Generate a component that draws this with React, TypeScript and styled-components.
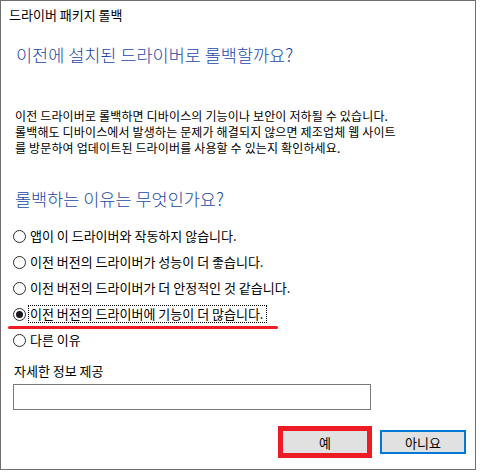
import { useState } from "react"
import styled, { createGlobalStyle } from "styled-components"

const GlobalStyle = createGlobalStyle`
    html, body {
        margin: 0;
        padding: 0;
        background: #ffffff;
    }
    body {
        font-family: "Noto Sans CJK KR", "Noto Sans", sans-serif;
        color: #000000;
    }
`

const Window = styled.div`
    box-sizing: border-box;
    display: flex;
    flex-direction: column;
    width: 476px;
    height: 470px;
    border: 1px solid #6e6e6e;
    background: #ffffff;
`

const TitleBar = styled.div`
    height: 29px;
    padding: 5px 0 0 8px;
    box-sizing: border-box;
    font-size: 13px;
    line-height: 18px;
`

const Body = styled.div`
    display: flex;
    flex-direction: column;
    padding: 0 9px 0 12px;
`

const MainInstruction = styled.div`
    margin: 13px 0 0 3px;
    font-size: 17.5px;
    font-weight: 300;
    line-height: 24px;
    color: #1a48a8;
`

const Description = styled.p`
    margin: 41px 0 0 2px;
    font-size: 12px;
    line-height: 16px;
    letter-spacing: 0.15px;
    white-space: nowrap;
`

const SubHeading = styled.div`
    margin: 31px 0 0 2px;
    font-size: 17.5px;
    font-weight: 300;
    line-height: 24px;
    color: #1a48a8;
`

const ReasonList = styled.div`
    display: flex;
    flex-direction: column;
    margin-top: 12px;
`

const ReasonRow = styled.label`
    position: relative;
    display: flex;
    align-items: center;
    height: 26px;
    font-size: 13px;
    cursor: default;
`

const RadioCircle = styled.span<{ $checked: boolean }>`
    position: relative;
    box-sizing: border-box;
    width: 13px;
    height: 13px;
    border: 1px solid #2b2b2b;
    border-radius: 50%;
    background: #ffffff;
    flex-shrink: 0;

    &::after {
        content: "";
        position: absolute;
        top: 2px;
        left: 2px;
        width: 7px;
        height: 7px;
        border-radius: 50%;
        background: ${({ $checked }) => ($checked ? "#1a1a1a" : "transparent")};
    }
`

const ReasonText = styled.span<{ $focused: boolean }>`
    margin-left: 2px;
    padding: 0 3px 0 1px;
    line-height: 16px;
    border: 1px dotted ${({ $focused }) => ($focused ? "#000000" : "transparent")};
`

const Highlight = styled.span`
    position: absolute;
    left: -5px;
    top: 25px;
    width: 270px;
    height: 3px;
    border-radius: 2px;
    background: #ed1c24;
`

const FieldLabel = styled.div`
    margin: 9px 0 0 1px;
    font-size: 13px;
    line-height: 18px;
`

const DetailInput = styled.input`
    box-sizing: border-box;
    width: 358px;
    height: 26px;
    margin-top: 4px;
    border: 1px solid #7a7a7a;
    outline: none;
    font-family: inherit;
    font-size: 12px;
`

const ButtonRow = styled.div`
    display: flex;
    justify-content: flex-end;
    gap: 12px;
    margin-top: 20px;
`

const DialogButton = styled.button<{ $primary?: boolean; $marked?: boolean }>`
    box-sizing: border-box;
    width: 86px;
    height: 24px;
    padding: 0;
    background: #e1e1e1;
    border: ${({ $primary }) => ($primary ? "2px solid #0078d7" : "1px solid #adadad")};
    border-bottom-color: ${({ $primary }) => ($primary ? "#0078d7" : "#9a9a9a")};
    outline: ${({ $marked }) => ($marked ? "5px solid #ed1c24" : "none")};
    outline-offset: -1px;
    font-family: inherit;
    font-size: 13px;
    color: #000000;
`

const reasons = [
    "앱이 이 드라이버와 작동하지 않습니다.",
    "이전 버전의 드라이버가 성능이 더 좋습니다.",
    "이전 버전의 드라이버가 더 안정적인 것 같습니다.",
    "이전 버전의 드라이버에 기능이 더 많습니다.",
    "다른 이유",
]

export default function App() {
    const [selected, setSelected] = useState(3)

    return (
        <>
            <GlobalStyle />
            <Window>
                <TitleBar>드라이버 패키지 롤백</TitleBar>
                <Body>
                    <MainInstruction>이전에 설치된 드라이버로 롤백할까요?</MainInstruction>
                    <Description>
                        이전 드라이버로 롤백하면 디바이스의 기능이나 보안이 저하될 수 있습니다.<br />
                        롤백해도 디바이스에서 발생하는 문제가 해결되지 않으면 제조업체 웹 사이트<br />
                        를 방문하여 업데이트된 드라이버를 사용할 수 있는지 확인하세요.
                    </Description>
                    <SubHeading>롤백하는 이유는 무엇인가요?</SubHeading>
                    <ReasonList>
                        {reasons.map((reason, index) => (
                            <ReasonRow key={`reason__${index}`} onClick={() => setSelected(index)}>
                                <RadioCircle $checked={selected == index} />
                                <ReasonText $focused={selected == index}>{reason}</ReasonText>
                                {index == 3 ? <Highlight /> : <></>}
                            </ReasonRow>
                        ))}
                    </ReasonList>
                    <FieldLabel>자세한 정보 제공</FieldLabel>
                    <DetailInput />
                    <ButtonRow>
                        <DialogButton $marked>예</DialogButton>
                        <DialogButton $primary>아니요</DialogButton>
                    </ButtonRow>
                </Body>
            </Window>
        </>
    )
}
